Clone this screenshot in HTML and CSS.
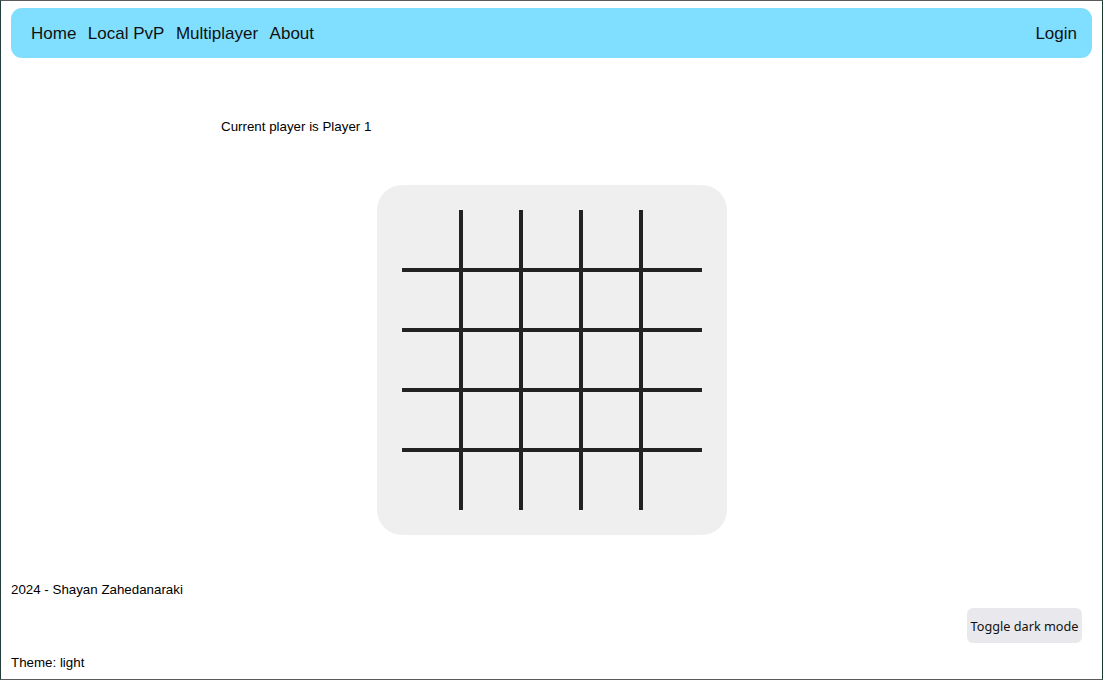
FILE: index.html
```html
<!DOCTYPE html>
<html lang="en">
<head>
<meta charset="utf-8">
<title>Tic Tac Toe</title>
<link rel="stylesheet" href="styles.css">
</head>
<body>
<nav class="nav">
  <div class="nav-links">
    <a class="nav-link" href="#">Home</a>
    <a class="nav-link" href="#">Local PvP</a>
    <a class="nav-link" href="#">Multiplayer</a>
    <a class="nav-link" href="#">About</a>
  </div>
  <a class="nav-link" href="#">Login</a>
</nav>
<main class="main">
  <div class="status">Current player is Player 1</div>
  <div class="board">
    <div class="grid">
      <div class="cell"></div><div class="cell"></div><div class="cell"></div><div class="cell"></div><div class="cell"></div>
      <div class="cell"></div><div class="cell"></div><div class="cell"></div><div class="cell"></div><div class="cell"></div>
      <div class="cell"></div><div class="cell"></div><div class="cell"></div><div class="cell"></div><div class="cell"></div>
      <div class="cell"></div><div class="cell"></div><div class="cell"></div><div class="cell"></div><div class="cell"></div>
      <div class="cell"></div><div class="cell"></div><div class="cell"></div><div class="cell"></div><div class="cell"></div>
    </div>
  </div>
</main>
<footer class="footer">
  <div class="credit">2024 - Shayan Zahedanaraki</div>
  <div class="toggle-row"><button class="toggle">Toggle dark mode</button></div>
  <div class="theme">Theme: light</div>
</footer>
</body>
</html>
```
FILE: styles.css
```css
html, body {
  height: 100%;
}
body {
  margin: 8px 11px 0 11px;
  font-family: "Liberation Sans", Arial, sans-serif;
  color: #000;
  background: #fff;
  box-sizing: border-box;
}
body::after {
  content: "";
  position: fixed;
  inset: 0;
  border-top: 1px solid #5a5a5a;
  border-bottom: 1px solid #5a5a5a;
  border-left: 1px solid #223c3c;
  border-right: 1px solid #1d3a30;
  pointer-events: none;
}
.nav {
  height: 50px;
  background: #80dfff;
  border-radius: 11px;
  display: flex;
  align-items: center;
  justify-content: space-between;
  padding: 2px 15px 0 20px;
  box-sizing: border-box;
  font-size: 17px;
}
.nav-links {
  display: flex;
  gap: 11.5px;
}
.nav-link {
  color: #111;
  text-decoration: none;
}
.main {
  display: flex;
  flex-direction: column;
  align-items: center;
  padding-top: 61px;
}
.status {
  width: 661px;
  font-size: 13.33px;
  line-height: 15px;
}
.board {
  margin-top: 51px;
  width: 300px;
  height: 300px;
  padding: 25px;
  background: #efefef;
  border-radius: 25px;
}
.grid {
  display: grid;
  grid-template-columns: 57px 56px 56px 56px 59px;
  grid-template-rows: 58px 56px 56px 56px 58px;
  gap: 4px;
  width: 300px;
  height: 300px;
  background: #222;
}
.cell {
  background: #efefef;
}
.footer {
  margin-top: 47px;
  font-size: 13.33px;
  line-height: 15px;
}
.toggle-row {
  display: flex;
  justify-content: flex-end;
  padding-right: 10px;
  margin-top: 11px;
}
.toggle {
  font-family: "Noto Sans", sans-serif;
  font-size: 12.7px;
  width: 115px;
  height: 35px;
  padding: 0;
  background: #e9e9ed;
  border: none;
  border-radius: 6px;
  color: #111;
}
.theme {
  margin-top: 12px;
}
```
